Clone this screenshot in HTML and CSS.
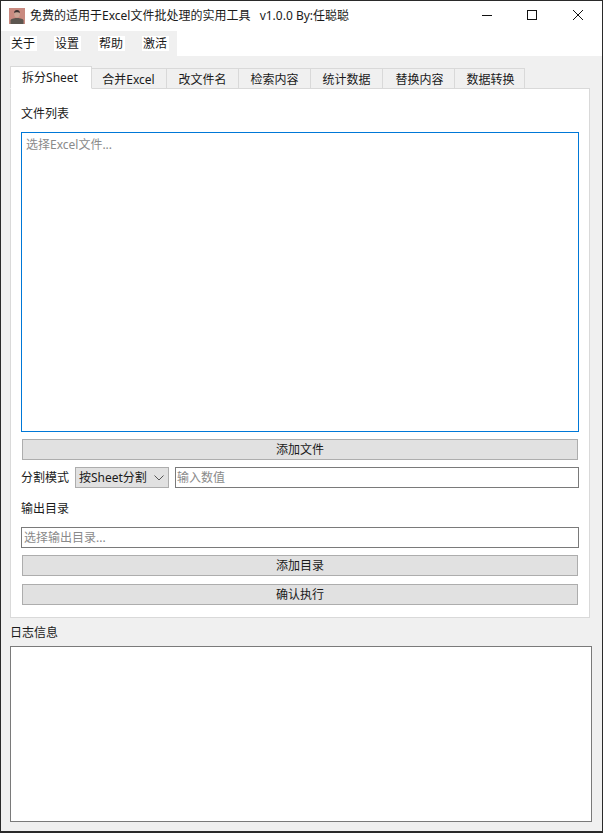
FILE: index.html
```html
<!DOCTYPE html>
<html lang="zh-CN">
<head>
<meta charset="utf-8">
<title>免费的适用于Excel文件批处理的实用工具</title>
<link rel="stylesheet" href="styles.css">
</head>
<body>
<div class="window">
  <header class="titlebar">
    <svg class="app-icon" width="16" height="16" viewBox="0 0 16 16" aria-hidden="true">
      <rect width="16" height="16" fill="#c98a80"/>
      <ellipse cx="8" cy="6" rx="2.800" ry="3.600" fill="#c9a595"/>
      <path d="M5.100 5.200C5 3 6.200 2 8 2s3 1 2.900 3.200C10 4 6 4 5.100 5.200z" fill="#3a3030"/>
      <path d="M1.500 16v-3.500C1.500 11 4.500 10 8 10s6.500 1 6.500 2.500V16z" fill="#5c5650"/>
    </svg>
    <span class="title">免费的适用于Excel文件批处理的实用工具&nbsp; <span class="version">v1.0.0 By:任聪聪</span></span>
    <div class="controls">
      <svg class="ctl" width="46" height="30" viewBox="0 0 46 30" aria-hidden="true"><path d="M18 14.500h10" stroke="#111" fill="none"/></svg>
      <svg class="ctl" width="46" height="30" viewBox="0 0 46 30" aria-hidden="true"><rect x="17.500" y="9.500" width="9" height="9" stroke="#111" fill="none"/></svg>
      <svg class="ctl" width="46" height="30" viewBox="0 0 46 30" aria-hidden="true"><path d="M17 9l10 10M27 9L17 19" stroke="#111" fill="none"/></svg>
    </div>
  </header>

  <nav class="menubar">
    <span class="menu-item">关于</span>
    <span class="menu-item">设置</span>
    <span class="menu-item">帮助</span>
    <span class="menu-item">激活</span>
  </nav>

  <main class="content">
    <div class="tabs">
      <span class="tab tab-active">拆分Sheet</span>
      <span class="tab tab-merge">合并Excel</span>
      <span class="tab tab-rename">改文件名</span>
      <span class="tab tab-search">检索内容</span>
      <span class="tab tab-stats">统计数据</span>
      <span class="tab tab-replace">替换内容</span>
      <span class="tab tab-convert">数据转换</span>
    </div>

    <section class="pane">
      <div class="label label-files">文件列表</div>
      <div class="field file-list">选择Excel文件...</div>
      <div class="button button-first">添加文件</div>
      <div class="mode-row">
        <span class="mode-label">分割模式</span>
        <div class="combo">
          <span>按Sheet分割</span>
          <svg width="10" height="6" viewBox="0 0 10 6" aria-hidden="true"><path d="M.5.500L5 5 9.500.500" stroke="#555" fill="none"/></svg>
        </div>
        <div class="field line-input value-input">输入数值</div>
      </div>
      <div class="label label-output">输出目录</div>
      <div class="field line-input">选择输出目录...</div>
      <div class="button button-dir">添加目录</div>
      <div class="button button-run">确认执行</div>
    </section>

    <div class="log-label">日志信息</div>
    <div class="log"></div>
  </main>
</div>
</body>
</html>
```

FILE: styles.css
```css
* {
  box-sizing: border-box;
}

html,
body {
  margin: 0;
  height: 100%;
}

body {
  background: #2a2a2a;
  font-family: "Noto Sans", "Noto Sans CJK SC", sans-serif;
  font-size: 12px;
  line-height: 16px;
  color: #1a1a1a;
}

.window {
  width: 601px;
  height: 831px;
  margin-left: 1px;
  padding-top: 1px;
  display: flex;
  flex-direction: column;
}

.titlebar {
  height: 30px;
  flex: none;
  background: #fff;
  display: flex;
  align-items: center;
  padding-left: 8px;
}

.app-icon {
  flex: none;
}

.title {
  margin-left: 5px;
  flex: 1;
  white-space: nowrap;
}

.version {
  margin-left: 3px;
}

.controls {
  display: flex;
  flex: none;
}

.ctl {
  display: block;
}

.menubar {
  height: 25px;
  flex: none;
  background: linear-gradient(to right, #f0f0f0 176px, #fff 176px);
  display: flex;
  align-items: center;
  padding-left: 9px;
  gap: 17px;
}

.menu-item {
  width: 27px;
  height: 15px;
  line-height: 15px;
  padding-left: 1px;
  background: #fff;
  white-space: nowrap;
}

.content {
  flex: 1;
  background: #f0f0f0;
  padding: 10px 9px 9px;
  display: flex;
  flex-direction: column;
}

.tabs {
  display: flex;
  align-items: flex-end;
  height: 23px;
  flex: none;
  position: relative;
  z-index: 1;
  margin-bottom: -1px;
}

.tab {
  height: 21px;
  line-height: 19px;
  padding-top: 1px;
  border: 1px solid #d9d9d9;
  border-left: 0;
  background: #f0f0f0;
  text-align: center;
  white-space: nowrap;
}

.tab-active {
  height: 23px;
  width: 82px;
  line-height: 21px;
  padding-top: 0;
  padding-right: 2px;
  background: #fff;
  border-left: 1px solid #d9d9d9;
  border-bottom-color: #fff;
}

.tab-merge { width: 75px; padding-right: 1px; }
.tab-rename { width: 72px; }
.tab-search { width: 72px; }
.tab-stats { width: 72px; }
.tab-replace { width: 72px; padding-left: 2px; }
.tab-convert { width: 70px; padding-left: 2px; }

.pane {
  width: 580px;
  height: 530px;
  flex: none;
  background: #fff;
  border: 1px solid #d9d9d9;
  padding: 0 10px;
  display: flex;
  flex-direction: column;
}

.label {
  height: 16px;
  line-height: 16px;
}

.label-files {
  margin-top: 17px;
  margin-bottom: 10px;
}

.field {
  background: #fff;
  border: 1px solid #7a7a7a;
  color: #8a8a8a;
  padding: 0 2px;
}

.file-list {
  height: 300px;
  border-color: #0078d7;
  padding: 4px;
}

.button {
  height: 21px;
  line-height: 19px;
  margin: 0 1px;
  background: #e1e1e1;
  border: 1px solid #adadad;
  text-align: center;
}

.button-first {
  margin-top: 7px;
}

.mode-row {
  display: flex;
  align-items: center;
  height: 21px;
  margin-top: 7px;
}

.mode-label {
  width: 48px;
  flex: none;
}

.combo {
  width: 94px;
  height: 21px;
  flex: none;
  margin-left: 6px;
  background: #e1e1e1;
  border: 1px solid #adadad;
  padding: 0 4px 0 3px;
  display: flex;
  align-items: center;
  justify-content: space-between;
}

.line-input {
  height: 21px;
  line-height: 19px;
}

.value-input {
  flex: 1;
  margin-left: 6px;
  padding-left: 1px;
}

.label-output {
  margin-top: 13px;
  margin-bottom: 10px;
}

.button-dir {
  margin-top: 7px;
}

.button-run {
  margin-top: 8px;
}

.log-label {
  height: 16px;
  margin-top: 7px;
  margin-bottom: 5px;
  flex: none;
}

.log {
  width: 582px;
  height: 176px;
  flex: none;
  background: #fff;
  border: 1px solid #7a7a7a;
}
```
